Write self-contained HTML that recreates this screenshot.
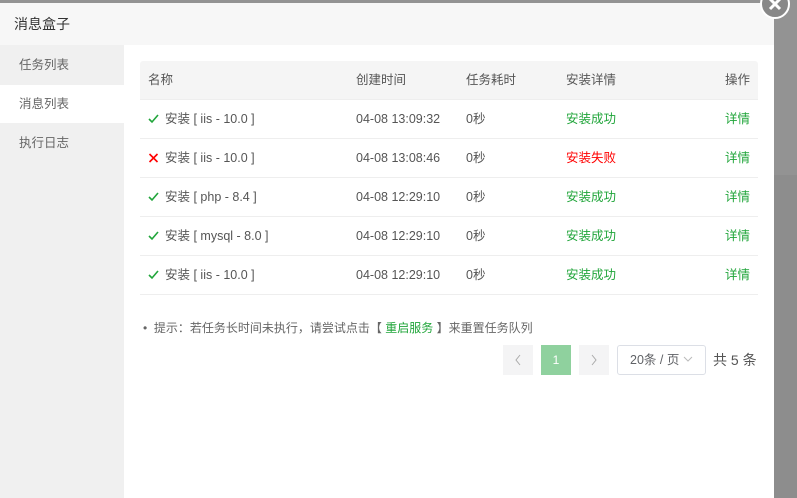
<!DOCTYPE html>
<html><head><meta charset="utf-8"><style>
*{margin:0;padding:0;box-sizing:border-box}
body{width:797px;height:498px;overflow:hidden;background:#939393;font-family:"Liberation Sans","Noto Sans CJK SC",sans-serif;font-size:12.5px;color:#555;position:relative}
.dlg{position:absolute;left:0;top:3px;width:774px;height:495px;background:#fff}
.hd{height:42px;background:#f7f7f7;padding-left:14px;line-height:42px;font-size:14px;color:#333}
.side{position:absolute;left:0;top:42px;width:124px;bottom:0;background:#f0f0f0}
.side div{height:40px;line-height:40px;padding-left:19px;color:#666;font-size:12.5px}
.side .act{background:#fff;height:38px;line-height:38px}
.tbl{position:absolute;left:140px;top:58px;width:618px}
.row{height:39px;border-bottom:1px solid #eee;position:relative;line-height:39px}
.th{background:#f5f5f5;border-radius:3px 3px 0 0}
.row span{position:absolute;top:0}
.c1{left:8px}.c2{left:216px}.c3{left:326px}.c4{left:426px}.c5{right:8px}
.g{color:#20a53a}.r{color:#f00}
.row svg{vertical-align:-1px;margin-right:6px}
.tip{position:absolute;left:143px;top:316px;color:#666;font-size:12px}
.tip b{font-weight:normal;color:#20a53a}
.pg{position:absolute;top:342px;height:30px}
.btn{background:#f4f4f5;width:30px;color:#aaa;text-align:center;line-height:30px;font-size:12px}
.btn svg{margin-top:9px}
.sel{border:1px solid #dcdfe6;border-radius:3px;width:89px;line-height:28px;padding-left:12px;color:#606266}
.close{position:absolute;left:760px;top:-11px;width:30px;height:30px;border-radius:50%;background:#888;border:2px solid #fff}
</style></head><body>
<div style="position:absolute;left:774px;top:175px;width:23px;height:323px;background:#8d8d8d"></div>
<div class="dlg">
<div class="hd">消息盒子</div>
<div class="side"><div>任务列表</div><div class="act">消息列表</div><div>执行日志</div></div>
<div class="tbl">
<div class="row th"><span class="c1">名称</span><span class="c2">创建时间</span><span class="c3">任务耗时</span><span class="c4">安装详情</span><span class="c5">操作</span></div>
<div class="row"><span class="c1"><svg width="11" height="10"><path d="M1 5l3 3 6-7" stroke="#20a53a" stroke-width="1.6" fill="none"/></svg>安装 [ iis - 10.0 ]</span><span class="c2">04-08 13:09:32</span><span class="c3">0秒</span><span class="c4 g">安装成功</span><span class="c5 g">详情</span></div>
<div class="row"><span class="c1"><svg width="11" height="10"><path d="M1.5 1l8 8M9.5 1l-8 8" stroke="#f00" stroke-width="1.6" fill="none"/></svg>安装 [ iis - 10.0 ]</span><span class="c2">04-08 13:08:46</span><span class="c3">0秒</span><span class="c4 r">安装失败</span><span class="c5 g">详情</span></div>
<div class="row"><span class="c1"><svg width="11" height="10"><path d="M1 5l3 3 6-7" stroke="#20a53a" stroke-width="1.6" fill="none"/></svg>安装 [ php - 8.4 ]</span><span class="c2">04-08 12:29:10</span><span class="c3">0秒</span><span class="c4 g">安装成功</span><span class="c5 g">详情</span></div>
<div class="row"><span class="c1"><svg width="11" height="10"><path d="M1 5l3 3 6-7" stroke="#20a53a" stroke-width="1.6" fill="none"/></svg>安装 [ mysql - 8.0 ]</span><span class="c2">04-08 12:29:10</span><span class="c3">0秒</span><span class="c4 g">安装成功</span><span class="c5 g">详情</span></div>
<div class="row"><span class="c1"><svg width="11" height="10"><path d="M1 5l3 3 6-7" stroke="#20a53a" stroke-width="1.6" fill="none"/></svg>安装 [ iis - 10.0 ]</span><span class="c2">04-08 12:29:10</span><span class="c3">0秒</span><span class="c4 g">安装成功</span><span class="c5 g">详情</span></div>
</div>
<div class="tip">•&nbsp; 提示：若任务长时间未执行，请尝试点击【 <b>重启服务</b> 】来重置任务队列</div>
<div class="pg btn" style="left:503px"><svg width="8" height="12"><path d="M6 1L2 6l4 5" stroke="#aaa" fill="none"/></svg></div>
<div class="pg btn" style="left:541px;background:#8fd19e;color:#fff">1</div>
<div class="pg btn" style="left:579px"><svg width="8" height="12"><path d="M2 1l4 5-4 5" stroke="#aaa" fill="none"/></svg></div>
<div class="pg sel" style="left:617px">20条 / 页 <svg width="10" height="6" style="vertical-align:2px"><path d="M1 1l4 4 4-4" stroke="#bbb" fill="none"/></svg></div>
<div class="pg" style="left:713px;line-height:30px;font-size:14px;color:#555">共 5 条</div>
</div>
<div class="close"><svg width="26" height="26"><path d="M8 8l10 10M18 8L8 18" stroke="#fff" stroke-width="3"/></svg></div>
</body></html>
